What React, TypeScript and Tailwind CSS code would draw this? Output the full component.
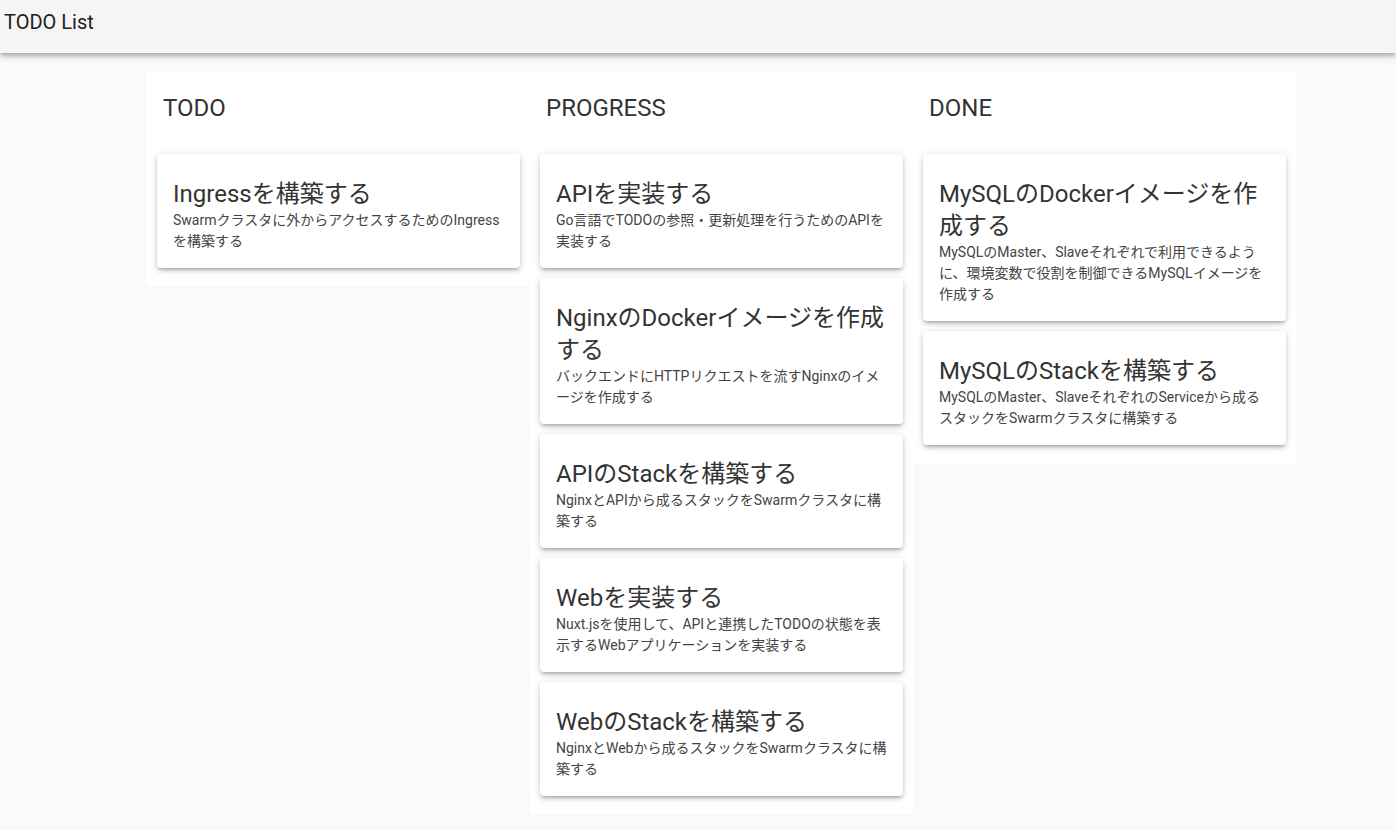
import React from "react";

type Task = { title: string; desc: string };

const columns: { name: string; tasks: Task[] }[] = [
  {
    name: "TODO",
    tasks: [
      { title: "Ingressを構築する", desc: "Swarmクラスタに外からアクセスするためのIngressを構築する" },
    ],
  },
  {
    name: "PROGRESS",
    tasks: [
      { title: "APIを実装する", desc: "Go言語でTODOの参照・更新処理を行うためのAPIを実装する" },
      { title: "NginxのDockerイメージを作成する", desc: "バックエンドにHTTPリクエストを流すNginxのイメージを作成する" },
      { title: "APIのStackを構築する", desc: "NginxとAPIから成るスタックをSwarmクラスタに構築する" },
      { title: "Webを実装する", desc: "Nuxt.jsを使用して、APIと連携したTODOの状態を表示するWebアプリケーションを実装する" },
      { title: "WebのStackを構築する", desc: "NginxとWebから成るスタックをSwarmクラスタに構築する" },
    ],
  },
  {
    name: "DONE",
    tasks: [
      { title: "MySQLのDockerイメージを作成する", desc: "MySQLのMaster、Slaveそれぞれで利用できるように、環境変数で役割を制御できるMySQLイメージを作成する" },
      { title: "MySQLのStackを構築する", desc: "MySQLのMaster、SlaveそれぞれのServiceから成るスタックをSwarmクラスタに構築する" },
    ],
  },
];

const font = { fontFamily: 'Roboto, "Noto Sans CJK JP", sans-serif' };

export default function App() {
  return (
    <div className="min-h-[830px] bg-[#fafafa]" style={font}>
      <header className="h-[53px] bg-[#f5f5f5] shadow-[0_2px_4px_-1px_rgba(0,0,0,0.2),0_4px_5px_0_rgba(0,0,0,0.14),0_1px_10px_0_rgba(0,0,0,0.12)] relative z-10">
        <div className="pl-[4px] pt-[8px] text-[20px] leading-[28px] font-normal text-[#212121]">TODO List</div>
      </header>
      <main className="pt-[19px] pl-[147px]">
        <div className="flex items-start w-[1149px]">
          {columns.map((col) => (
            <section key={col.name} className="w-[383px] bg-white pb-[18px]">
              <h2 className="pt-[20px] px-[16px] text-[24px] leading-[32px] font-normal text-[#333]">{col.name}</h2>
              <div className="mt-[30px] mx-[10px] flex flex-col gap-[10px]">
                {col.tasks.map((t) => (
                  <div
                    key={t.title}
                    className="bg-white rounded-[4px] pt-[24px] pb-[16px] px-[16px] shadow-[0_3px_3px_-2px_rgba(0,0,0,0.2),0_3px_4px_0_rgba(0,0,0,0.14),0_1px_8px_0_rgba(0,0,0,0.12)]"
                  >
                    <div className="text-[24px] leading-[32px] font-normal text-[#333]">{t.title}</div>
                    <div className="text-[14px] leading-[21px] text-[#444]">{t.desc}</div>
                  </div>
                ))}
              </div>
            </section>
          ))}
        </div>
      </main>
    </div>
  );
}
